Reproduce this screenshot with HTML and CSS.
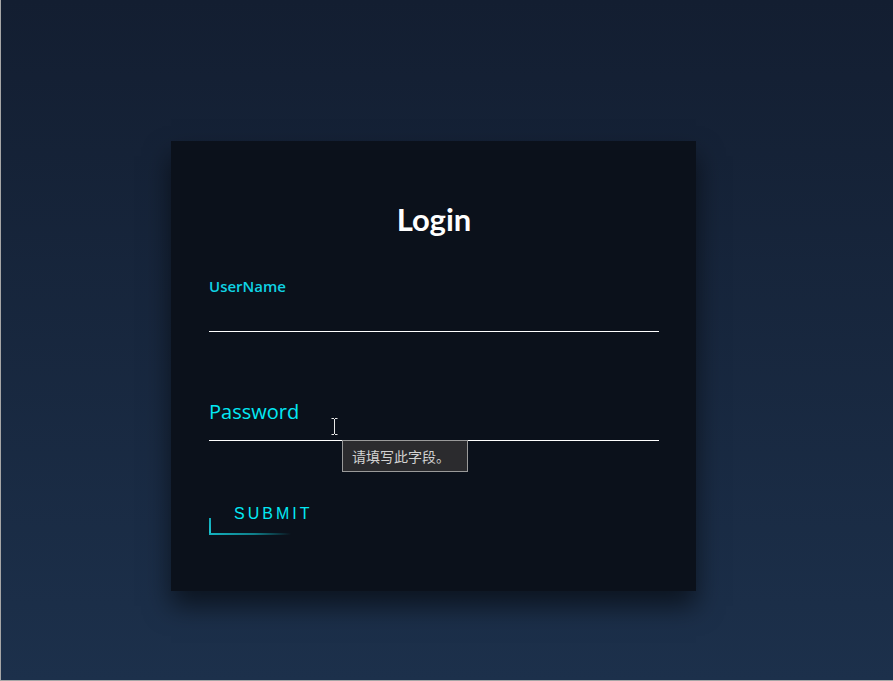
FILE: index.html
```html
<!DOCTYPE html>
<html lang="zh">
<head>
<meta charset="utf-8">
<title>Login</title>
<link rel="stylesheet" href="styles.css">
</head>
<body>
  <div class="login-box">
    <h2 class="title">Login</h2>
    <form class="form">
      <div class="field field-user">
        <label class="label-small">UserName</label>
        <div class="input-line"></div>
      </div>
      <div class="field field-pass">
        <label class="label-large">Password</label>
        <svg class="ibeam" width="7" height="17" viewBox="0 0 7 17">
          <path d="M0.5 0.5h2.5M4 0.5h2.5M3.5 1v15M0.5 16.5h2.5M4 16.5h2.5" stroke="#e8e8e8" stroke-width="1" fill="none"/>
        </svg>
        <div class="tooltip">请填写此字段。</div>
      </div>
      <a class="submit">
        <span class="edge-left"></span>
        <span class="edge-bottom"></span>
        SUBMIT
      </a>
    </form>
  </div>
</body>
</html>
```

FILE: styles.css
```css
html, body {
  margin: 0;
  padding: 0;
}

body {
  box-sizing: border-box;
  width: 893px;
  height: 681px;
  border-left: 1px solid #a6a6a6;
  border-bottom: 1px solid #a6a6a6;
  background: linear-gradient(#131e31, #1c304b);
  display: flex;
  justify-content: center;
  align-items: flex-start;
  padding-top: 141px;
  padding-right: 27px;
  overflow: hidden;
}

.login-box {
  box-sizing: border-box;
  width: 525px;
  height: 450px;
  padding: 61px 37px 0 38px;
  background: #0b111b;
  box-shadow: 0 15px 25px rgba(0, 0, 0, 0.55);
}

.title {
  margin: 0;
  font-family: Lato, "Liberation Sans", sans-serif;
  font-weight: 700;
  font-size: 31px;
  line-height: 34px;
  color: #ffffff;
  text-align: center;
}

.form {
  margin-top: 40px;
  display: flex;
  flex-direction: column;
}

.field {
  position: relative;
}

.label-small {
  display: block;
  font-family: "Open Sans", "Noto Sans", sans-serif;
  font-weight: 600;
  font-size: 15px;
  line-height: 20px;
  color: #0fd3e4;
}

.input-line {
  height: 35px;
  border-bottom: 1px solid #ffffff;
}

.field-pass {
  margin-top: 60px;
  height: 42px;
  padding-top: 6px;
  border-bottom: 1px solid #ffffff;
  display: flex;
  align-items: flex-start;
}

.label-large {
  font-family: "Open Sans", "Noto Sans", sans-serif;
  font-size: 20px;
  line-height: 28px;
  color: #03e9f4;
}

.ibeam {
  position: absolute;
  left: 122px;
  top: 26px;
}

.tooltip {
  position: absolute;
  left: 133px;
  top: 48px;
  box-sizing: border-box;
  width: 126px;
  height: 32px;
  padding: 0 0 0 9px;
  background: #2b2b2e;
  border: 1px solid #9a9a9a;
  color: #d2d2d2;
  font-family: "Noto Sans CJK SC", "Noto Sans", sans-serif;
  font-size: 14px;
  line-height: 30px;
}

.submit {
  position: relative;
  align-self: flex-start;
  margin-top: 54px;
  padding: 10px 24px 12px 25px;
  font-family: "Liberation Sans", Arial, sans-serif;
  font-size: 16px;
  line-height: 18px;
  letter-spacing: 3px;
  color: #03e9f4;
  text-decoration: none;
}

.edge-left {
  position: absolute;
  left: 0;
  bottom: 0;
  width: 2px;
  height: 17px;
  background: linear-gradient(0deg, #1cc6d3, #12a9b6);
}

.edge-bottom {
  position: absolute;
  left: 0;
  bottom: 0;
  width: 82px;
  height: 2px;
  background: linear-gradient(90deg, #14b3c0, #0f7f8a 55%, rgba(11, 17, 27, 0));
}
```
